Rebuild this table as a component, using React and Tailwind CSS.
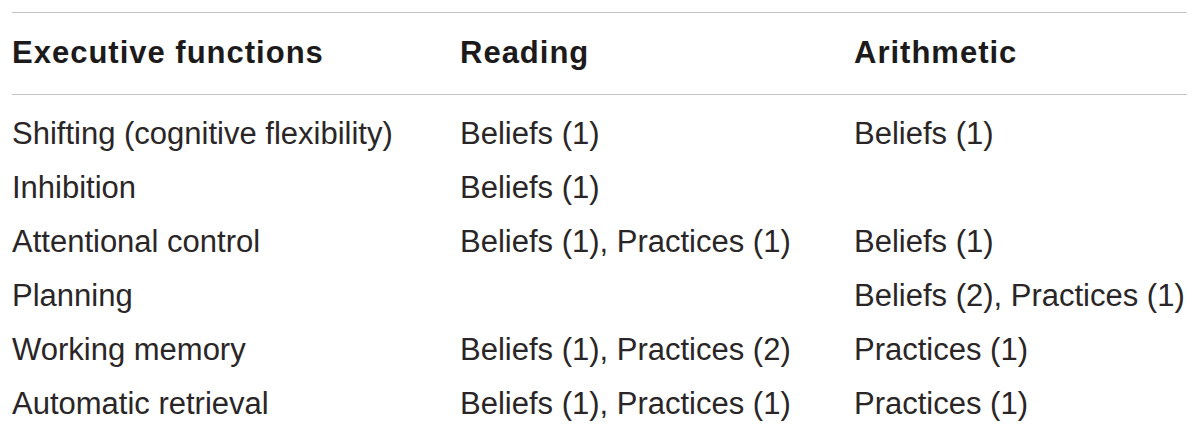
import React from 'react';

const rows = [
  ['Shifting (cognitive flexibility)', 'Beliefs (1)', 'Beliefs (1)'],
  ['Inhibition', 'Beliefs (1)', ''],
  ['Attentional control', 'Beliefs (1), Practices (1)', 'Beliefs (1)'],
  ['Planning', '', 'Beliefs (2), Practices (1)'],
  ['Working memory', 'Beliefs (1), Practices (2)', 'Practices (1)'],
  ['Automatic retrieval', 'Beliefs (1), Practices (1)', 'Practices (1)'],
];

export default function App() {
  return (
    <div className="w-[1200px] h-[435px] bg-white pl-[12px] pt-[12px] overflow-hidden font-['Liberation_Sans',Arial,sans-serif]">
      <div className="w-[1175px]">
        {/* header */}
        <div className="grid grid-cols-[448px_394px_1fr] items-center h-[83px] border-t border-b border-[#c4c4c4] text-[31px] font-bold tracking-[1px] text-[#1c1a1b]">
          <div>Executive functions</div>
          <div>Reading</div>
          <div>Arithmetic</div>
        </div>

        {/* body */}
        <div className="pt-[12px] text-[31px] leading-[54px] text-[#2a2627]">
          {rows.map((r, i) => (
            <div key={i} className="grid grid-cols-[448px_394px_1fr] h-[54px] whitespace-nowrap">
              <div>{r[0]}</div>
              <div>{r[1]}</div>
              <div>{r[2]}</div>
            </div>
          ))}
        </div>
      </div>
    </div>
  );
}
